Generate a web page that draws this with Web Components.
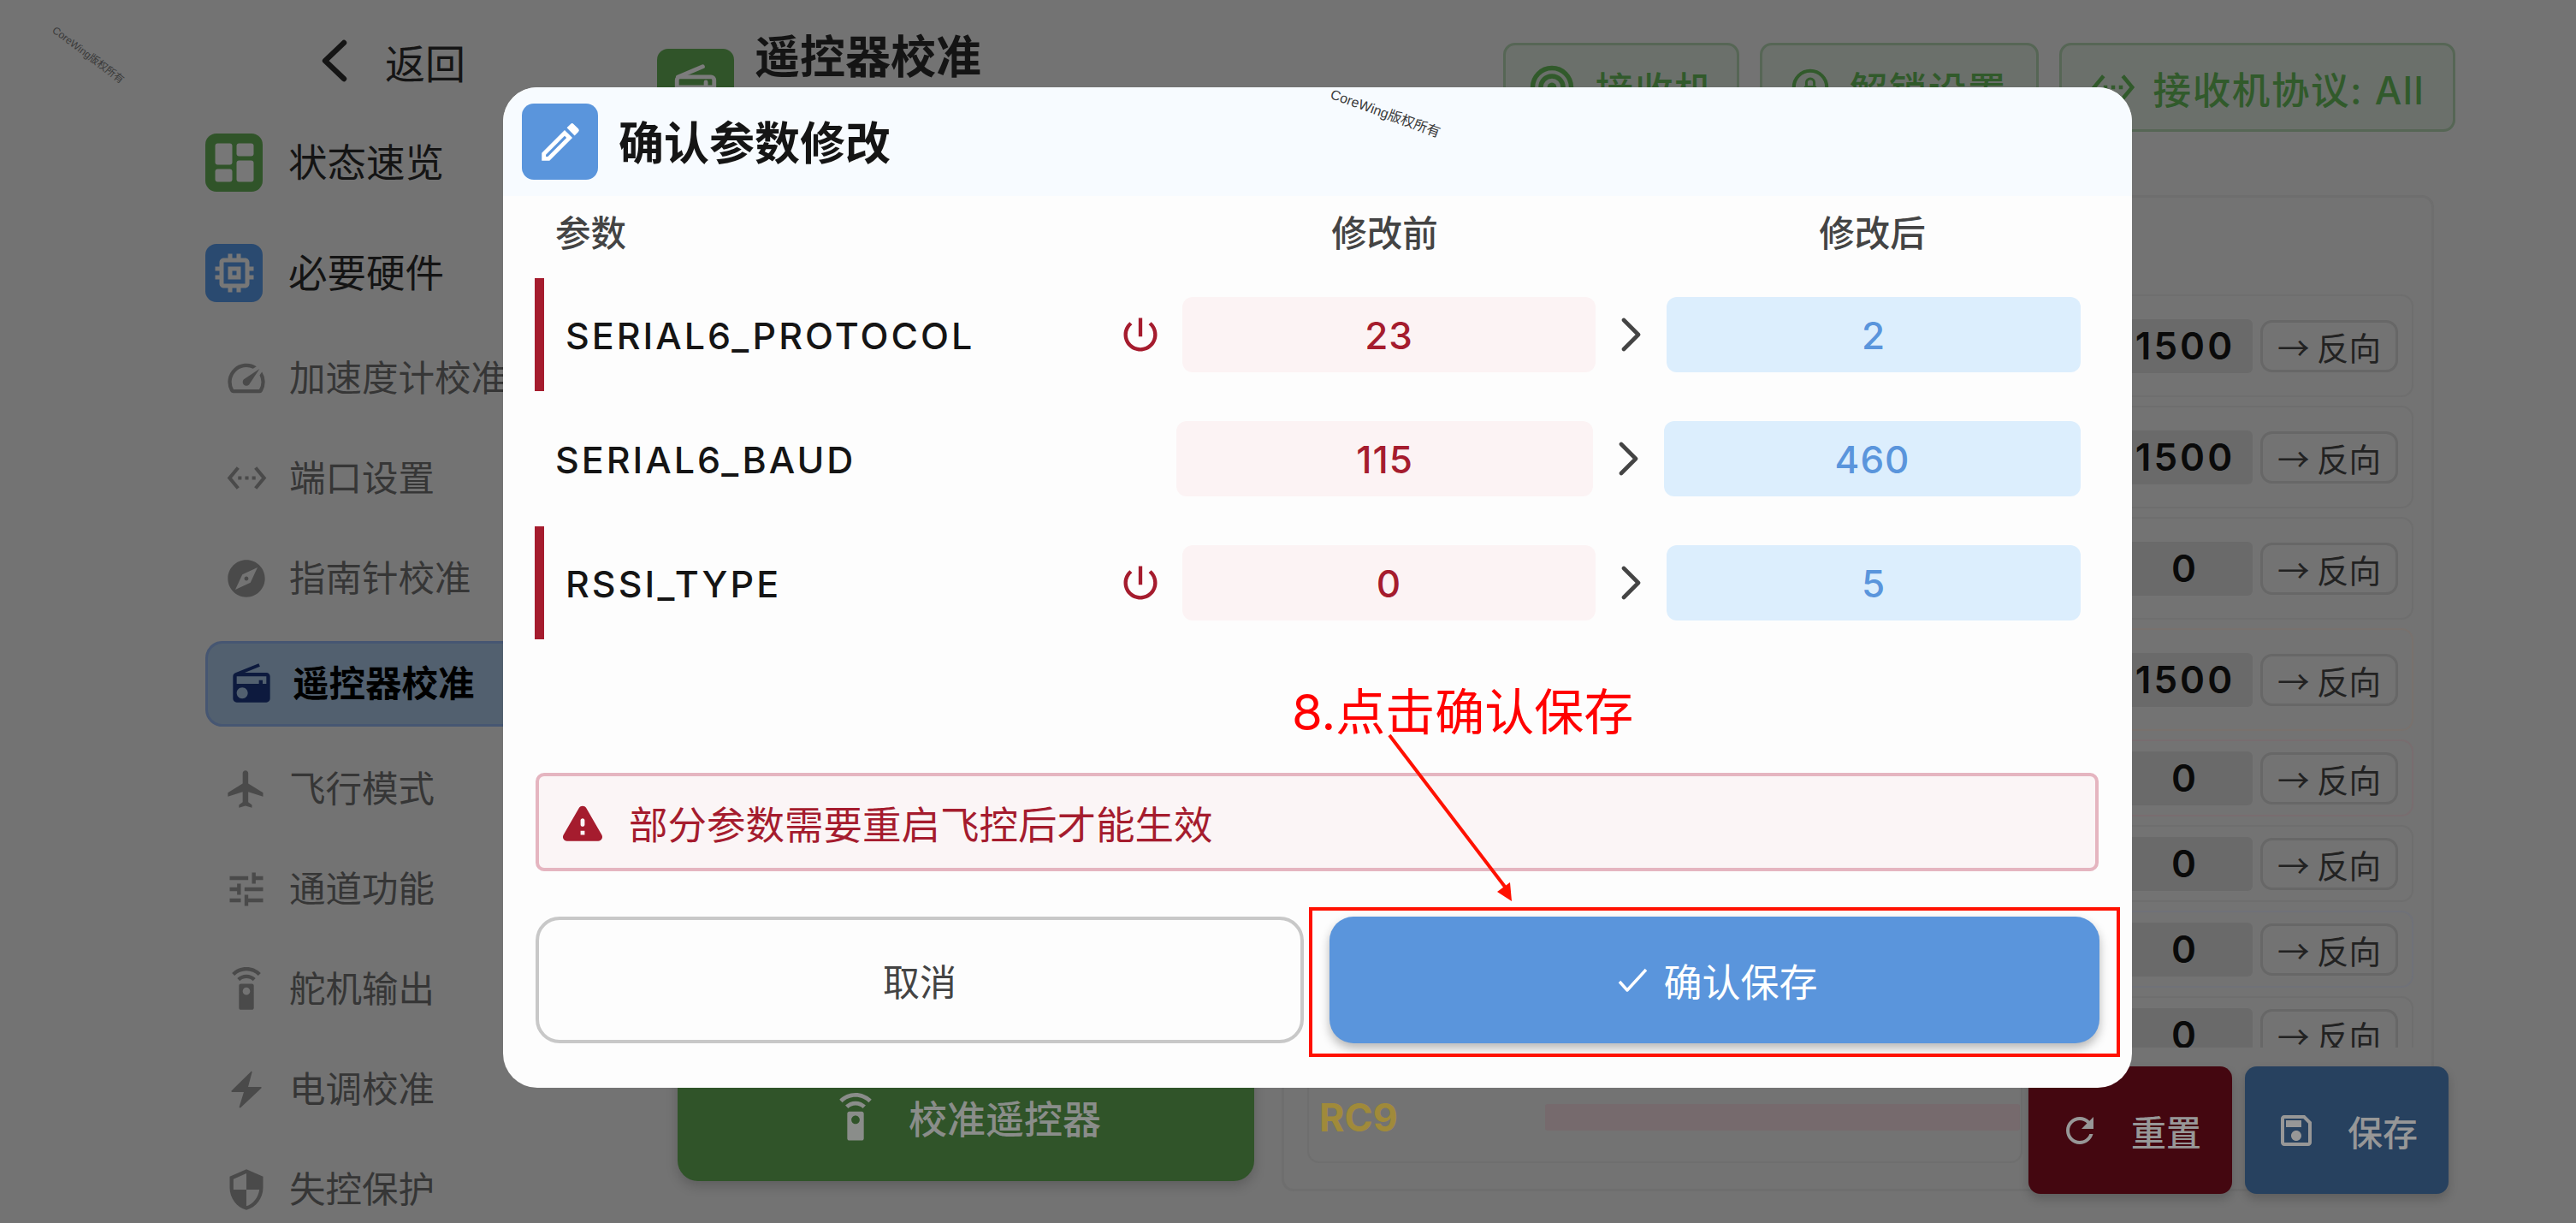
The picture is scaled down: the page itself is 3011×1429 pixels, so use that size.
<!DOCTYPE html>
<html lang="zh">
<head>
<meta charset="utf-8">
<title>遥控器校准</title>
<style>
  html, body { margin: 0; padding: 0; }
  body {
    position: relative;
    width: 3011px;
    height: 1429px;
    overflow: hidden;
    background: #737373;
    font-family: Inter, "Noto Sans CJK SC", sans-serif;
    display: grid;
    grid-template-columns: 768px 1fr;
  }
</style>
</head>
<body>

<!-- the page behind the dialog: colours are the dimmed ones, no separate scrim -->
<side-bar>
  <back-link>返回</back-link>
  <side-item kind="tile" icon="dashboard" style="--tile:#305429">状态速览</side-item>
  <side-item kind="tile" icon="memory" style="--tile:#2a4a70">必要硬件</side-item>
  <side-item icon="speed">加速度计校准</side-item>
  <side-item icon="ethernet">端口设置</side-item>
  <side-item icon="explore">指南针校准</side-item>
  <side-item kind="active" icon="radio">遥控器校准</side-item>
  <side-item icon="flight">飞行模式</side-item>
  <side-item icon="tune">通道功能</side-item>
  <side-item icon="remote">舵机输出</side-item>
  <side-item icon="bolt">电调校准</side-item>
  <side-item icon="security">失控保护</side-item>
</side-bar>

<main-area>
  <top-chip slot="chips" icon="radar" style="--chip:276px;--gap:24px">接收机</top-chip>
  <top-chip slot="chips" icon="unlock" style="--chip:326px;--gap:24px;--ico:44px">解锁设置</top-chip>
  <top-chip slot="chips" icon="ethernet" style="--chip:463px">接收机协议: All</top-chip>

  <channel-row>1500</channel-row>
  <channel-row>1500</channel-row>
  <channel-row>0</channel-row>
  <channel-row style="--edge:#78716d">1500</channel-row>
  <channel-row kind="short" style="--edge:#786d6f">0</channel-row>
  <channel-row kind="short">0</channel-row>
  <channel-row kind="short" style="--edge:#6f7178">0</channel-row>
  <channel-row kind="short">0</channel-row>
</main-area>

<action-bar>
  <action-button icon="refresh" style="--bg:#440710">重置</action-button>
  <action-button icon="save" style="--bg:#27415f">保存</action-button>
</action-bar>

<water-mark style="--x:104px;--y:63px;--a:37deg;--f:12px"></water-mark>

<confirm-dialog>
  <param-row reboot before="23" after="2">SERIAL6_PROTOCOL</param-row>
  <param-row before="115" after="460">SERIAL6_BAUD</param-row>
  <param-row reboot before="0" after="5">RSSI_TYPE</param-row>
</confirm-dialog>

<water-mark style="--x:1620px;--y:131px;--a:20deg;--f:16px"></water-mark>

<step-note>8.点击确认保存</step-note>

<script>
const ICONS = {
  dashboard: '<rect x="3" y="3" width="8" height="10" rx="1.2"/><rect x="3" y="15" width="8" height="6" rx="1.2"/><rect x="13" y="11" width="8" height="10" rx="1.2"/><rect x="13" y="3" width="8" height="6" rx="1.2"/>',
  memory: '<path d="M15 9H9v6h6V9zm-2 4h-2v-2h2v2zm8-2V9h-2V7c0-1.1-.9-2-2-2h-2V3h-2v2h-2V3H9v2H7c-1.1 0-2 .9-2 2v2H3v2h2v2H3v2h2v2c0 1.1.9 2 2 2h2v2h2v-2h2v2h2v-2h2c1.1 0 2-.9 2-2v-2h2v-2h-2v-2h2zm-4 6H7V7h10v10z"/>',
  speed: '<path d="M20.38 8.57l-1.23 1.85a8 8 0 0 1-.22 7.58H5.07A8 8 0 0 1 15.58 6.85l1.85-1.23A10 10 0 0 0 3.35 19a2 2 0 0 0 1.72 1h13.85a2 2 0 0 0 1.74-1 10 10 0 0 0-.27-10.44zm-9.79 6.84a2 2 0 0 0 2.83 0l5.66-8.49-8.49 5.66a2 2 0 0 0 0 2.83z"/>',
  ethernet: '<path d="M7.77 6.76L6.23 5.48.82 12l5.41 6.52 1.54-1.28L3.42 12l4.35-5.24zM7 13h2v-2H7v2zm10-2h-2v2h2v-2zm-6 2h2v-2h-2v2zm6.77-7.52l-1.54 1.28L20.58 12l-4.35 5.24 1.54 1.28L23.18 12l-5.41-6.52z"/>',
  explore: '<path d="M12 10.9c-.61 0-1.1.49-1.1 1.1s.49 1.1 1.1 1.1c.61 0 1.1-.49 1.1-1.1s-.49-1.1-1.1-1.1zM12 2C6.48 2 2 6.48 2 12s4.48 10 10 10 10-4.48 10-10S17.52 2 12 2zm2.19 12.19L6 18l3.81-8.19L18 6l-3.81 8.19z"/>',
  radio: '<path d="M3.24 6.15C2.51 6.43 2 7.17 2 8v12c0 1.1.89 2 2 2h16c1.11 0 2-.9 2-2V8c0-1.11-.89-2-2-2H8.3l8.26-3.34L15.88 1 3.24 6.15zM7 20c-1.66 0-3-1.34-3-3s1.34-3 3-3 3 1.34 3 3-1.34 3-3 3zm13-8h-2v-2h-2v2H4V8h16v4z"/>',
  radioline: '<g fill="none" stroke="currentColor" stroke-width="2" stroke-linecap="round"><path d="M3.5 7 15.5 2"/><rect x="3" y="7" width="18" height="14" rx="1.5"/><path d="M3 12h18M17 12V9.5"/></g><circle cx="7.5" cy="16.5" r="2"/>',
  flight: '<path d="M21 16v-2l-8-5V3.5c0-.83-.67-1.5-1.5-1.5S10 2.67 10 3.5V9l-8 5v2l8-2.5V19l-2 1.5V22l3.5-1 3.5 1v-1.5L13 19v-5.5l8 2.5z"/>',
  tune: '<path d="M3 17v2h6v-2H3zM3 5v2h10V5H3zm10 16v-2h8v-2h-8v-2h-2v6h2zM7 9v2H3v2h4v2h2V9H7zm14 4v-2H11v2h10zm-6-4h2V7h4V5h-4V3h-2v6z"/>',
  remote: '<path d="M15 9H9c-.55 0-1 .45-1 1v12c0 .55.45 1 1 1h6c.55 0 1-.45 1-1V10c0-.55-.45-1-1-1zm-3 6c-1.1 0-2-.9-2-2s.9-2 2-2 2 .9 2 2-.9 2-2 2zM7.05 6.05l1.41 1.41C9.37 6.56 10.62 6 12 6s2.63.56 3.54 1.46l1.41-1.41C15.68 4.78 13.93 4 12 4s-3.68.78-4.95 2.05zM12 0C8.96 0 6.21 1.23 4.22 3.22l1.41 1.41C7.26 3.01 9.51 2 12 2s4.74 1.01 6.36 2.64l1.41-1.41C17.79 1.23 15.04 0 12 0z"/>',
  bolt: '<path d="M14.6 1.6c.3-.4.8-.1.7.3L13 10.5h7.4c.4 0 .6.5.3.8L8.6 22.6c-.4.3-.9 0-.8-.4L10.5 13.5H3.6c-.4 0-.6-.5-.3-.8L14.6 1.6z"/>',
  security: '<path d="M12 1L3 5v6c0 5.55 3.84 10.74 9 12 5.16-1.26 9-6.45 9-12V5l-9-4zm0 10.99h7c-.53 4.12-3.28 7.79-7 8.94V12H5V6.3l7-3.11v8.8z"/>',
  edit: '<path d="M3 17.25V21h3.75L17.81 9.94l-3.75-3.75L3 17.25zM5.92 19H5v-.92l9.06-9.06.92.92L5.92 19zM20.71 7.04a.996.996 0 0 0 0-1.41l-2.34-2.34a.996.996 0 0 0-1.41 0l-1.83 1.83 3.75 3.75 1.83-1.83z"/>',
  power: '<path d="M13 3h-2v10h2V3zm4.83 2.17l-1.42 1.42C17.99 7.86 19 9.81 19 12c0 3.87-3.13 7-7 7s-7-3.13-7-7c0-2.19 1.01-4.14 2.58-5.42L6.17 5.17C4.23 6.82 3 9.26 3 12c0 4.97 4.03 9 9 9s9-4.03 9-9c0-2.74-1.23-5.18-3.17-6.83z"/>',
  warning: '<path d="M4.47 21h15.06c1.54 0 2.5-1.67 1.73-3L13.73 4.99c-.77-1.33-2.69-1.33-3.46 0L2.74 18c-.77 1.33.19 3 1.73 3zM12 14c-.55 0-1-.45-1-1v-2c0-.55.45-1 1-1s1 .45 1 1v2c0 .55-.45 1-1 1zm1 4h-2v-2h2v2z"/>',
  refresh: '<path d="M17.65 6.35C16.2 4.9 14.21 4 12 4c-4.42 0-7.99 3.58-7.99 8s3.57 8 7.99 8c3.73 0 6.84-2.55 7.73-6h-2.08c-.82 2.33-3.04 4-5.65 4-3.31 0-6-2.69-6-6s2.69-6 6-6c1.66 0 3.14.69 4.22 1.78L13 11h7V4l-2.35 2.35z"/>',
  save: '<path d="M17 3H5c-1.11 0-2 .9-2 2v14c0 1.1.89 2 2 2h14c1.1 0 2-.9 2-2V7l-4-4zm2 16H5V5h11.17L19 7.83V19zm-7-7c-1.66 0-3 1.34-3 3s1.34 3 3 3 3-1.34 3-3-1.34-3-3-3zM6 6h9v4H6z"/>',
  radar: '<g fill="none" stroke="currentColor" stroke-width="2.4"><circle cx="12" cy="12" r="10"/><circle cx="12" cy="12" r="5.8"/></g><circle cx="12" cy="12" r="2.4"/>',
  unlock: '<circle cx="12" cy="12" r="10.5" fill="none" stroke="currentColor" stroke-width="2.2"/><rect x="8" y="11" width="8" height="6" rx="1"/><path d="M9.5 11V9a2.5 2.5 0 0 1 5 0v2" fill="none" stroke="currentColor" stroke-width="1.6"/>',
  chevron: '<polyline points="4,3 21,20 4,37" fill="none" stroke="currentColor" stroke-width="4.6" stroke-linecap="round" stroke-linejoin="round"/>',
  back: '<polyline points="27,4 5,25 27,46" fill="none" stroke="currentColor" stroke-width="6.4" stroke-linecap="round" stroke-linejoin="round"/>',
  check: '<polyline points="2,16 11,26 33,2" fill="none" stroke="currentColor" stroke-width="3.4" stroke-linejoin="round"/>'
};

customElements.define("ui-icon", class extends HTMLElement {
  connectedCallback() {
    if (this.shadowRoot) return;
    const root = this.attachShadow({ mode: "open" });
    const vb = this.getAttribute("vb") || "0 0 24 24";
    root.innerHTML = `
      <style>
        :host { display: block; flex: none; width: var(--w, 24px); height: var(--h, var(--w, 24px)); }
        svg { display: block; width: 100%; height: 100%; fill: currentColor; }
      </style>
      <svg viewBox="${vb}" preserveAspectRatio="xMidYMid meet">${ICONS[this.getAttribute("name")] || ""}</svg>
    `;
  }
});

customElements.define("side-bar", class extends HTMLElement {
  constructor() {
    super();
    this.attachShadow({ mode: "open" }).innerHTML = `
      <style>
        :host { display: flex; flex-direction: column; padding: 21px 0 0 240px; overflow: hidden; min-width: 0; }
      </style>
      <slot></slot>
    `;
  }
});

customElements.define("back-link", class extends HTMLElement {
  constructor() {
    super();
    this.attachShadow({ mode: "open" }).innerHTML = `
      <style>
        :host { display: flex; flex: none; align-items: center; height: 100px; margin-bottom: 4px; padding-left: 135px; color: #151515; font-size: 47px; }
        ui-icon { --w: 31px; --h: 50px; margin-right: 44px; }
      </style>
      <ui-icon name="back" vb="0 0 31 50"></ui-icon><slot></slot>
    `;
  }
});

customElements.define("side-item", class extends HTMLElement {
  connectedCallback() {
    if (this.shadowRoot) return;
    const icon = this.getAttribute("icon");
    const kind = this.getAttribute("kind") || "plain";
    const sizes = { ethernet: 49, bolt: 48 };
    const w = sizes[icon] || (kind === "tile" ? 60 : 52);
    this.attachShadow({ mode: "open" }).innerHTML = `
      <style>
        :host { display: flex; flex: none; align-items: center; height: 117px; color: #363636; font-size: 42.5px; white-space: nowrap; }
        .ico { display: flex; align-items: center; justify-content: center; box-sizing: border-box; width: 98px; padding-right: 2px; color: #4a4a4a; flex: none; }
        .t { margin-bottom: 6px; }
        ui-icon { --w: ${w}px; }

        :host([kind="tile"]) { height: 129px; color: #141414; font-size: 45.5px; }
        :host([kind="tile"]) .ico { width: 67px; height: 68px; padding: 0; margin-right: 30px; border-radius: 13px; background: var(--tile); color: #777; }

        :host([kind="active"]) { height: 129px; color: #000; font-weight: 700; }
        .box { display: flex; align-items: center; box-sizing: border-box; width: 500px; height: 100px; }
        :host([kind="active"]) .box { border: 3px solid #465672; border-radius: 20px; background: #52606f; }
        :host([kind="active"]) .ico { width: 99px; padding: 0 0 0 3px; color: #0d1a3e; }
      </style>
      <div class="box"><span class="ico"><ui-icon name="${icon}"></ui-icon></span><span class="t"><slot></slot></span></div>
    `;
  }
});

customElements.define("top-chip", class extends HTMLElement {
  connectedCallback() {
    if (this.shadowRoot) return;
    this.attachShadow({ mode: "open" }).innerHTML = `
      <style>
        :host { display: flex; align-items: center; justify-content: center; gap: var(--gap, 20px); box-sizing: border-box; width: var(--chip); height: 104px; border: 3px solid #566655; border-radius: 14px; background: #6b706b; color: #315a2b; font-size: 44.5px; font-weight: 500; letter-spacing: 1.6px; white-space: nowrap; }
        ui-icon { --w: var(--ico, 54px); }
      </style>
      <ui-icon name="${this.getAttribute("icon")}"></ui-icon><slot></slot>
    `;
  }
});

customElements.define("channel-row", class extends HTMLElement {
  constructor() {
    super();
    this.attachShadow({ mode: "open" }).innerHTML = `
      <style>
        :host { display: flex; flex: none; align-items: center; justify-content: flex-end; gap: 9px; box-sizing: border-box; height: 120px; padding-right: 16px; border: 2px solid var(--edge, #6e6e6e); border-radius: 14px; }
        :host([kind="short"]) { height: 90px; }
        .value { display: flex; align-items: center; justify-content: center; width: 158px; height: 63px; border-radius: 6px; background: #6a6a6a; color: #0a0a0a; font-size: 44px; font-weight: 600; letter-spacing: 3px; }
        .flip { display: flex; align-items: center; justify-content: center; box-sizing: border-box; width: 161px; height: 61px; border: 3px solid #676767; border-radius: 14px; color: #222; font-family: "Noto Sans CJK SC", sans-serif; font-size: 37.5px; white-space: pre; }
      </style>
      <span class="value"><slot></slot></span>
      <span class="flip">→ 反向</span>
    `;
  }
});

customElements.define("main-area", class extends HTMLElement {
  constructor() {
    super();
    this.attachShadow({ mode: "open" }).innerHTML = `
      <style>
        :host { display: flex; flex-direction: column; padding: 42px 141px 0 0; min-width: 0; }
        .top { display: flex; flex: none; align-items: flex-start; height: 186px; }
        .tile { display: flex; align-items: center; justify-content: center; width: 90px; height: 90px; margin: 15px 24px 0 0; border-radius: 13px; background: #305429; color: #7c7c7c; }
        .tile ui-icon { --w: 58px; }
        h1 { margin: -1px 0 0; color: #141414; font-size: 53px; line-height: 52px; font-weight: 700; }
        .chips { display: flex; gap: 24px; margin: 8px 0 0 auto; }
        .cols { display: grid; flex: none; grid-template-columns: 674px 1347px; gap: 32px; margin-left: 24px; height: 1164px; }
        .wide { align-self: end; display: flex; align-items: center; justify-content: center; gap: 33px; height: 149px; margin-bottom: 12px; border-radius: 24px; background: #305429; color: #8a8d8a; font-size: 45px; font-weight: 500; box-shadow: 0 6px 14px rgba(0,0,0,.18); }
        .wide ui-icon { --w: 58px; }
        .panel { box-sizing: border-box; padding: 113px 21px 0 27px; border: 3px solid #6e6e6e; border-radius: 14px; }
        .list { display: flex; flex-direction: column; gap: 10px; height: 880px; overflow: hidden; }
        .rc { display: flex; align-items: center; box-sizing: border-box; width: 836px; height: 135px; padding: 27px 0 0 12px; border: 2px solid #6e6e6e; border-radius: 14px; color: #a08a3a; font-size: 45px; font-weight: 700; }
        .bar { width: 555px; height: 31px; margin-left: 172px; border-radius: 3px; background: #766a6d; }
      </style>
      <div class="top">
        <div class="tile"><ui-icon name="radioline"></ui-icon></div>
        <h1>遥控器校准</h1>
        <div class="chips"><slot name="chips"></slot></div>
      </div>
      <div class="cols">
        <div class="wide"><ui-icon name="remote"></ui-icon><span>校准遥控器</span></div>
        <div class="panel">
          <div class="list"><slot></slot></div>
          <div class="rc"><span>RC9</span><span class="bar"></span></div>
        </div>
      </div>
    `;
  }
});

customElements.define("action-bar", class extends HTMLElement {
  constructor() {
    super();
    this.attachShadow({ mode: "open" }).innerHTML = `
      <style>
        :host { position: absolute; right: 149px; bottom: 34px; display: flex; gap: 15px; }
      </style>
      <slot></slot>
    `;
  }
});

customElements.define("action-button", class extends HTMLElement {
  connectedCallback() {
    if (this.shadowRoot) return;
    this.attachShadow({ mode: "open" }).innerHTML = `
      <style>
        :host { display: flex; align-items: center; justify-content: center; gap: 36px; width: 238px; height: 149px; border-radius: 14px; background: var(--bg); color: #979797; font-size: 41px; font-weight: 500; box-shadow: 0 6px 12px rgba(0,0,0,.18); }
        ui-icon { --w: 48px; }
      </style>
      <ui-icon name="${this.getAttribute("icon")}"></ui-icon><slot></slot>
    `;
  }
});

customElements.define("water-mark", class extends HTMLElement {
  constructor() {
    super();
    this.attachShadow({ mode: "open" }).innerHTML = `
      <style>
        :host { position: absolute; z-index: 5; left: var(--x); top: var(--y); transform: translate(-50%, -50%) rotate(var(--a)); color: #3a3a3a; font-family: "Liberation Sans", "Noto Sans CJK SC", sans-serif; font-size: var(--f); white-space: nowrap; }
      </style>
      CoreWing版权所有
    `;
  }
});

const PARAM_COLS = "750px 487px 83px 487px";

customElements.define("param-row", class extends HTMLElement {
  connectedCallback() {
    if (this.shadowRoot) return;
    this.attachShadow({ mode: "open" }).innerHTML = `
      <style>
        :host { display: grid; grid-template-columns: ${PARAM_COLS}; align-items: center; height: 132px; margin-bottom: 13px; color: #151515; font-size: 43px; font-weight: 500; letter-spacing: 3px; }
        :host([reboot]) { grid-template-columns: 757px 483px 83px 484px; }
        .name { display: flex; align-items: center; height: 100%; padding-left: 24px; box-sizing: border-box; }
        .name span { padding-top: 2px; }
        :host([reboot]) .name { padding-left: 25px; border-left: 11px solid #a51c2e; }
        .name ui-icon { display: none; --w: 52px; margin-left: auto; margin-right: 23px; color: #a51c2e; }
        :host([reboot]) .name ui-icon { display: block; }
        .val { display: flex; align-items: center; justify-content: center; box-sizing: border-box; height: 88px; padding-top: 2px; border-radius: 12px; font-size: 44px; font-weight: 500; letter-spacing: 1px; }
        .old { background: #fcf3f4; color: #a51c2e; }
        .new { background: #dceefd; color: #5a95dc; }
        .go { display: flex; justify-content: center; color: #444; }
        .go ui-icon { --w: 25px; --h: 40px; }
      </style>
      <div class="name"><span><slot></slot></span><ui-icon name="power"></ui-icon></div>
      <div class="val old">${this.getAttribute("before")}</div>
      <div class="go"><ui-icon name="chevron" vb="0 0 25 40"></ui-icon></div>
      <div class="val new">${this.getAttribute("after")}</div>
    `;
  }
});

customElements.define("confirm-dialog", class extends HTMLElement {
  constructor() {
    super();
    this.attachShadow({ mode: "open" }).innerHTML = `
      <style>
        :host { position: absolute; z-index: 2; left: 588px; top: 102px; display: block; box-sizing: border-box; width: 1904px; height: 1169px; border-radius: 40px; background: #fdfdfd; overflow: hidden; color: #151515; }
        header { display: flex; align-items: center; gap: 24px; height: 127px; padding-left: 22px; background: #f7fbff; }
        .pen { display: flex; align-items: center; justify-content: center; width: 89px; height: 89px; border-radius: 14px; background: #5a95dc; color: #fff; }
        .pen ui-icon { --w: 58px; }
        h2 { margin: 0 0 3px; font-size: 53px; font-weight: 700; }
        .cols { display: grid; grid-template-columns: ${PARAM_COLS}; align-items: center; height: 82px; margin: 0 60px 14px 37px; color: #444; font-size: 41.5px; font-weight: 500; }
        .cols span { text-align: center; }
        .cols span:first-child { text-align: left; padding-left: 24px; }
        .rows { margin: 0 60px 0 37px; height: 578px; }
        .warn { display: flex; align-items: center; gap: 25px; box-sizing: border-box; height: 115px; margin: 0 39px 0 38px; padding-left: 22px; border: 4px solid #e5b5c0; border-radius: 10px; background: #fbf5f6; color: #a51c2e; font-size: 45.5px; }
        .warn ui-icon { --w: 58px; }
        .btns { display: grid; grid-template-columns: 898px 900px; gap: 30px; margin: 53px 38px 0; }
        .btn { display: flex; align-items: center; justify-content: center; gap: 18px; box-sizing: border-box; height: 148px; border-radius: 28px; font-size: 45px; }
        .no { border: 4px solid #c8c8c8; color: #444; font-size: 43px; }
        .yes { padding-left: 8px; background: #5a95dc; color: #fff; box-shadow: 0 6px 12px rgba(0,0,0,.28); }
        .yes ui-icon { --w: 35px; --h: 28px; }
      </style>
      <header>
        <div class="pen"><ui-icon name="edit"></ui-icon></div>
        <h2>确认参数修改</h2>
      </header>
      <div class="cols"><span>参数</span><span>修改前</span><i></i><span>修改后</span></div>
      <div class="rows"><slot></slot></div>
      <div class="warn"><ui-icon name="warning"></ui-icon><span>部分参数需要重启飞控后才能生效</span></div>
      <div class="btns">
        <div class="btn no">取消</div>
        <div class="btn yes"><ui-icon name="check" vb="0 0 35 28"></ui-icon><span>确认保存</span></div>
      </div>
    `;
  }
});

// the red tutorial markup drawn over the screenshot
customElements.define("step-note", class extends HTMLElement {
  constructor() {
    super();
    this.attachShadow({ mode: "open" }).innerHTML = `
      <style>
        :host { position: absolute; z-index: 6; inset: 0; display: block; pointer-events: none; }
        .label { position: absolute; left: 1510px; top: 792px; color: #ff0000; font-size: 58px; line-height: 80px; white-space: nowrap; }
        .ring { position: absolute; left: 1530px; top: 1060px; box-sizing: border-box; width: 948px; height: 175px; border: 4px solid #ff1100; }
        svg { position: absolute; left: 0; top: 0; width: 3011px; height: 1429px; }
      </style>
      <div class="label"><slot></slot></div>
      <div class="ring"></div>
      <svg viewBox="0 0 3011 1429">
        <line x1="1624" y1="859" x2="1762" y2="1040" stroke="#ff1100" stroke-width="4"/>
        <polygon points="1767,1053 1750,1042 1765,1031" fill="#ff1100"/>
      </svg>
    `;
  }
});
</script>
</body>
</html>
